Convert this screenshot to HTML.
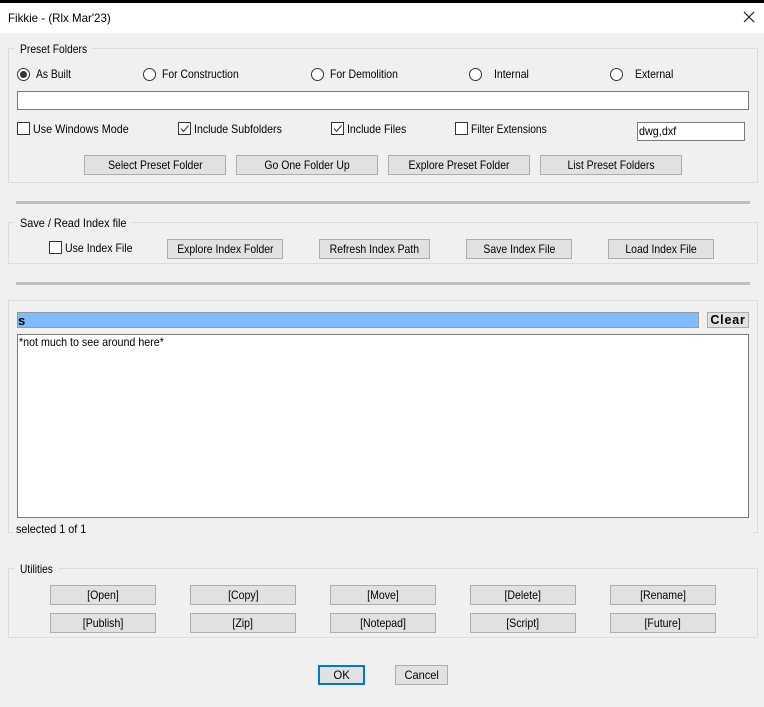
<!DOCTYPE html>
<html><head><meta charset="utf-8">
<style>
html,body{margin:0;padding:0;width:764px;height:707px;overflow:hidden;background:#f0f0f0}
body{position:relative;font-family:"Liberation Sans",sans-serif;font-size:12px;color:#000}
div,svg{position:absolute;box-sizing:border-box}
.g{border:1px solid #dcdcdc;left:8px;width:750px}
.t{white-space:nowrap;line-height:14px;height:14px;transform:scaleX(.87);transform-origin:0 50%}
.b{background:#e1e1e1;border:1px solid #adadad;height:20px;line-height:18px;text-align:center;white-space:nowrap}
.b span{display:inline-block;transform:scaleX(.87)}
.u span{transform:scaleX(.88)}
.i{background:#fff;border:1px solid #7a7a7a}
.c{width:13px;height:13px;background:#fff;border:1px solid #333}
.r{width:13px;height:13px;border-radius:50%;background:#fff;border:1px solid #333}
.s{left:16px;width:734px;height:3px;background:#bfbfbf}
.m{left:8px;height:3px;background:#f0f0f0}
</style></head><body>
<div style="left:0;top:0;width:764px;height:3px;background:#000"></div>
<div style="left:0;top:3px;width:764px;height:30px;background:#fff"></div>
<div class="t" style="left:8px;top:11px;transform:scaleX(.96)">Fikkie - (Rlx Mar'23)</div>
<svg style="left:743px;top:11px" width="12" height="12" viewBox="0 0 12 12"><path d="M1 1L11 11M11 1L1 11" stroke="#111" stroke-width="1.1" fill="none"/></svg>

<div class="g" style="top:48px;height:135px"></div>
<div class="m" style="left:15px;top:47px;width:76px"></div>
<div class="t" style="left:20px;top:42px;transform:scaleX(.86)">Preset Folders</div>
<div class="r" style="left:17px;top:68px"></div>
<div style="left:20px;top:71px;width:7px;height:7px;border-radius:50%;background:#333"></div>
<div class="t" style="left:36px;top:67px;transform:scaleX(.86)">As Built</div>
<div class="r" style="left:143px;top:68px"></div>
<div class="t" style="left:162px;top:67px;transform:scaleX(.865)">For Construction</div>
<div class="r" style="left:311px;top:68px"></div>
<div class="t" style="left:330px;top:67px;transform:scaleX(.87)">For Demolition</div>
<div class="r" style="left:469px;top:68px"></div>
<div class="t" style="left:494px;top:67px;transform:scaleX(.87)">Internal</div>
<div class="r" style="left:610px;top:68px"></div>
<div class="t" style="left:635px;top:67px;transform:scaleX(.87)">External</div>
<div class="i" style="left:17px;top:91px;width:732px;height:19px"></div>
<div class="c" style="left:17px;top:122px"></div>
<div class="t" style="left:33px;top:122px;transform:scaleX(.897)">Use Windows Mode</div>
<div class="c" style="left:178px;top:122px"></div>
<svg style="left:178px;top:122px" width="13" height="13"><path d="M3 6.5L5.5 9.5L10.5 3.5" stroke="#444" stroke-width="1.2" fill="none"/></svg>
<div class="t" style="left:194px;top:122px;transform:scaleX(.884)">Include Subfolders</div>
<div class="c" style="left:331px;top:122px"></div>
<svg style="left:331px;top:122px" width="13" height="13"><path d="M3 6.5L5.5 9.5L10.5 3.5" stroke="#444" stroke-width="1.2" fill="none"/></svg>
<div class="t" style="left:347px;top:122px;transform:scaleX(.88)">Include Files</div>
<div class="c" style="left:455px;top:122px"></div>
<div class="t" style="left:471px;top:122px;transform:scaleX(.854)">Filter Extensions</div>
<div class="i" style="left:637px;top:122px;width:108px;height:19px"></div>
<div class="t" style="left:639px;top:124px;transform:scaleX(.9)">dwg,dxf</div>
<div class="b" style="left:84px;top:155px;width:142px"><span>Select Preset Folder</span></div>
<div class="b" style="left:236px;top:155px;width:142px"><span>Go One Folder Up</span></div>
<div class="b" style="left:388px;top:155px;width:142px"><span>Explore Preset Folder</span></div>
<div class="b" style="left:540px;top:155px;width:142px"><span>List Preset Folders</span></div>

<div class="s" style="top:201px"></div>
<div class="g" style="top:222px;height:42px"></div>
<div class="m" style="left:15px;top:221px;width:116px"></div>
<div class="t" style="left:20px;top:216px;transform:scaleX(.907)">Save / Read Index file</div>
<div class="c" style="left:49px;top:241px"></div>
<div class="t" style="left:65px;top:241px;transform:scaleX(.88)">Use Index File</div>
<div class="b" style="left:167px;top:239px;width:116px"><span>Explore Index Folder</span></div>
<div class="b" style="left:319px;top:239px;width:111px"><span>Refresh Index Path</span></div>
<div class="b" style="left:466px;top:239px;width:106px"><span>Save Index File</span></div>
<div class="b" style="left:608px;top:239px;width:106px"><span>Load Index File</span></div>

<div class="s" style="top:282px"></div>
<div class="g" style="top:300px;height:233px"></div>
<div style="left:13px;top:528px;width:740px;height:8px;background:#f0f0f0"></div>
<div style="left:17px;top:312px;width:682px;height:16px;background:#7fbbff;border:1px solid #9a9a9a;font-weight:bold;line-height:15px;font-size:13px">s</div>
<div style="left:707px;top:312px;width:42px;height:16px;background:#e1e1e1;border:1px solid #adadad;font-weight:bold;font-size:12.5px;line-height:15px;text-align:center;letter-spacing:.8px">Clear</div>
<div class="i" style="left:17px;top:334px;width:732px;height:184px"></div>
<div class="t" style="left:19px;top:335px;transform:scaleX(.89)">*not much to see around here*</div>
<div class="t" style="left:16px;top:522px;transform:scaleX(.9)">selected 1 of 1</div>

<div class="g" style="top:568px;height:70px"></div>
<div class="m" style="left:15px;top:567px;width:43px"></div>
<div class="t" style="left:20px;top:562px;transform:scaleX(.85)">Utilities</div>
<div class="b u" style="left:50px;top:585px;width:106px"><span>[Open]</span></div>
<div class="b u" style="left:190px;top:585px;width:106px"><span>[Copy]</span></div>
<div class="b u" style="left:330px;top:585px;width:106px"><span>[Move]</span></div>
<div class="b u" style="left:470px;top:585px;width:106px"><span>[Delete]</span></div>
<div class="b u" style="left:610px;top:585px;width:106px"><span>[Rename]</span></div>
<div class="b u" style="left:50px;top:613px;width:106px"><span>[Publish]</span></div>
<div class="b u" style="left:190px;top:613px;width:106px"><span>[Zip]</span></div>
<div class="b u" style="left:330px;top:613px;width:106px"><span>[Notepad]</span></div>
<div class="b u" style="left:470px;top:613px;width:106px"><span>[Script]</span></div>
<div class="b u" style="left:610px;top:613px;width:106px"><span>[Future]</span></div>

<div class="b" style="left:318px;top:665px;width:47px;border:2px solid #0078d7;line-height:16px"><span style="transform:scaleX(.95)">OK</span></div>
<div class="b" style="left:395px;top:665px;width:53px"><span style="transform:scaleX(.92)">Cancel</span></div>
</body></html>
